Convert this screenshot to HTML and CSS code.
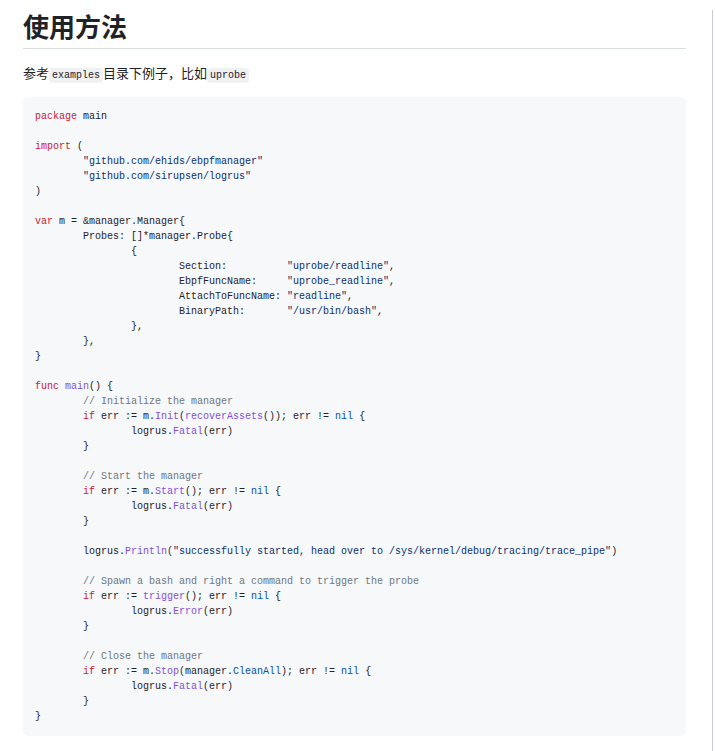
FILE: index.html
```html
<!DOCTYPE html>
<html lang="zh">
<head>
<meta charset="utf-8">
<link rel="stylesheet" href="styles.css">
</head>
<body>
<div class="page">
<article class="markdown">
<h2 class="title">使用方法</h2>
<p class="para">参考<code class="inline">examples</code>目录下例子，比如<code class="inline">uprobe</code></p>
<pre class="code"><code class="ln"><span class="k">package</span> main</code><code class="ln"></code><code class="ln"><span class="k">import</span> (</code><code class="ln">        <span class="s">"github.com/ehids/ebpfmanager"</span></code><code class="ln">        <span class="s">"github.com/sirupsen/logrus"</span></code><code class="ln">)</code><code class="ln"></code><code class="ln"><span class="k">var</span> m = &amp;manager.Manager{</code><code class="ln">        Probes: []*manager.Probe{</code><code class="ln">                {</code><code class="ln">                        Section:          <span class="s">"uprobe/readline"</span>,</code><code class="ln">                        EbpfFuncName:     <span class="s">"uprobe_readline"</span>,</code><code class="ln">                        AttachToFuncName: <span class="s">"readline"</span>,</code><code class="ln">                        BinaryPath:       <span class="s">"/usr/bin/bash"</span>,</code><code class="ln">                },</code><code class="ln">        },</code><code class="ln">}</code><code class="ln"></code><code class="ln"><span class="k">func</span> <span class="f">main</span>() {</code><code class="ln">        <span class="c">// Initialize the manager</span></code><code class="ln">        <span class="k">if</span> err := m.<span class="f">Init</span>(<span class="f">recoverAssets</span>()); err != <span class="n">nil</span> {</code><code class="ln">                logrus.<span class="f">Fatal</span>(err)</code><code class="ln">        }</code><code class="ln"></code><code class="ln">        <span class="c">// Start the manager</span></code><code class="ln">        <span class="k">if</span> err := m.<span class="f">Start</span>(); err != <span class="n">nil</span> {</code><code class="ln">                logrus.<span class="f">Fatal</span>(err)</code><code class="ln">        }</code><code class="ln"></code><code class="ln">        logrus.<span class="f">Println</span>(<span class="s">"successfully started, head over to /sys/kernel/debug/tracing/trace_pipe"</span>)</code><code class="ln"></code><code class="ln">        <span class="c">// Spawn a bash and right a command to trigger the probe</span></code><code class="ln">        <span class="k">if</span> err := <span class="f">trigger</span>(); err != <span class="n">nil</span> {</code><code class="ln">                logrus.<span class="f">Error</span>(err)</code><code class="ln">        }</code><code class="ln"></code><code class="ln">        <span class="c">// Close the manager</span></code><code class="ln">        <span class="k">if</span> err := m.<span class="f">Stop</span>(manager.<span class="n">CleanAll</span>); err != <span class="n">nil</span> {</code><code class="ln">                logrus.<span class="f">Fatal</span>(err)</code><code class="ln">        }</code><code class="ln">}</code></pre>
</article>
</div>
</body>
</html>
```

FILE: styles.css
```css
html, body {
  margin: 0;
  padding: 0;
  background: #ffffff;
}

body {
  width: 715px;
  color: #1f2328;
  font-family: "Noto Sans CJK SC", "Noto Sans", "Liberation Sans", sans-serif;
}

.page {
  box-sizing: border-box;
  width: 713px;
  min-height: 751px;
  padding: 0 26px 0 23px;
  border-right: 1px solid #c9ccd1;
}

.markdown {
  width: 663px;
}

.title {
  margin: 10px 0 0 0;
  padding-bottom: 6px;
  border-bottom: 1px solid #d8dee4;
  font-size: 26px;
  line-height: 32px;
  font-weight: 700;
  color: #1f2328;
}

.para {
  margin: 14px 0 12px 0;
  font-size: 13px;
  line-height: 19px;
}

.inline {
  font-family: "Liberation Mono", "DejaVu Sans Mono", monospace;
  font-size: 10px;
  padding: 2px 3px;
  border-radius: 4px;
  background: #eff1f3;
  color: #1f2328;
}

.code {
  margin: 0;
  padding: 12px 12px;
  background: #f6f8fa;
  border-radius: 5px;
  font-family: "Liberation Mono", "DejaVu Sans Mono", monospace;
  font-size: 10px;
  line-height: 15px;
  color: #1f2328;
  white-space: pre;
  overflow: hidden;
}

.ln {
  display: block;
  height: 15px;
  font-family: inherit;
  font-size: inherit;
  line-height: 15px;
  white-space: pre;
}

.k { color: #cf222e; }
.s { color: #0a3069; }
.f { color: #8250df; }
.c { color: #6e7781; }
.n { color: #0550ae; }
```
